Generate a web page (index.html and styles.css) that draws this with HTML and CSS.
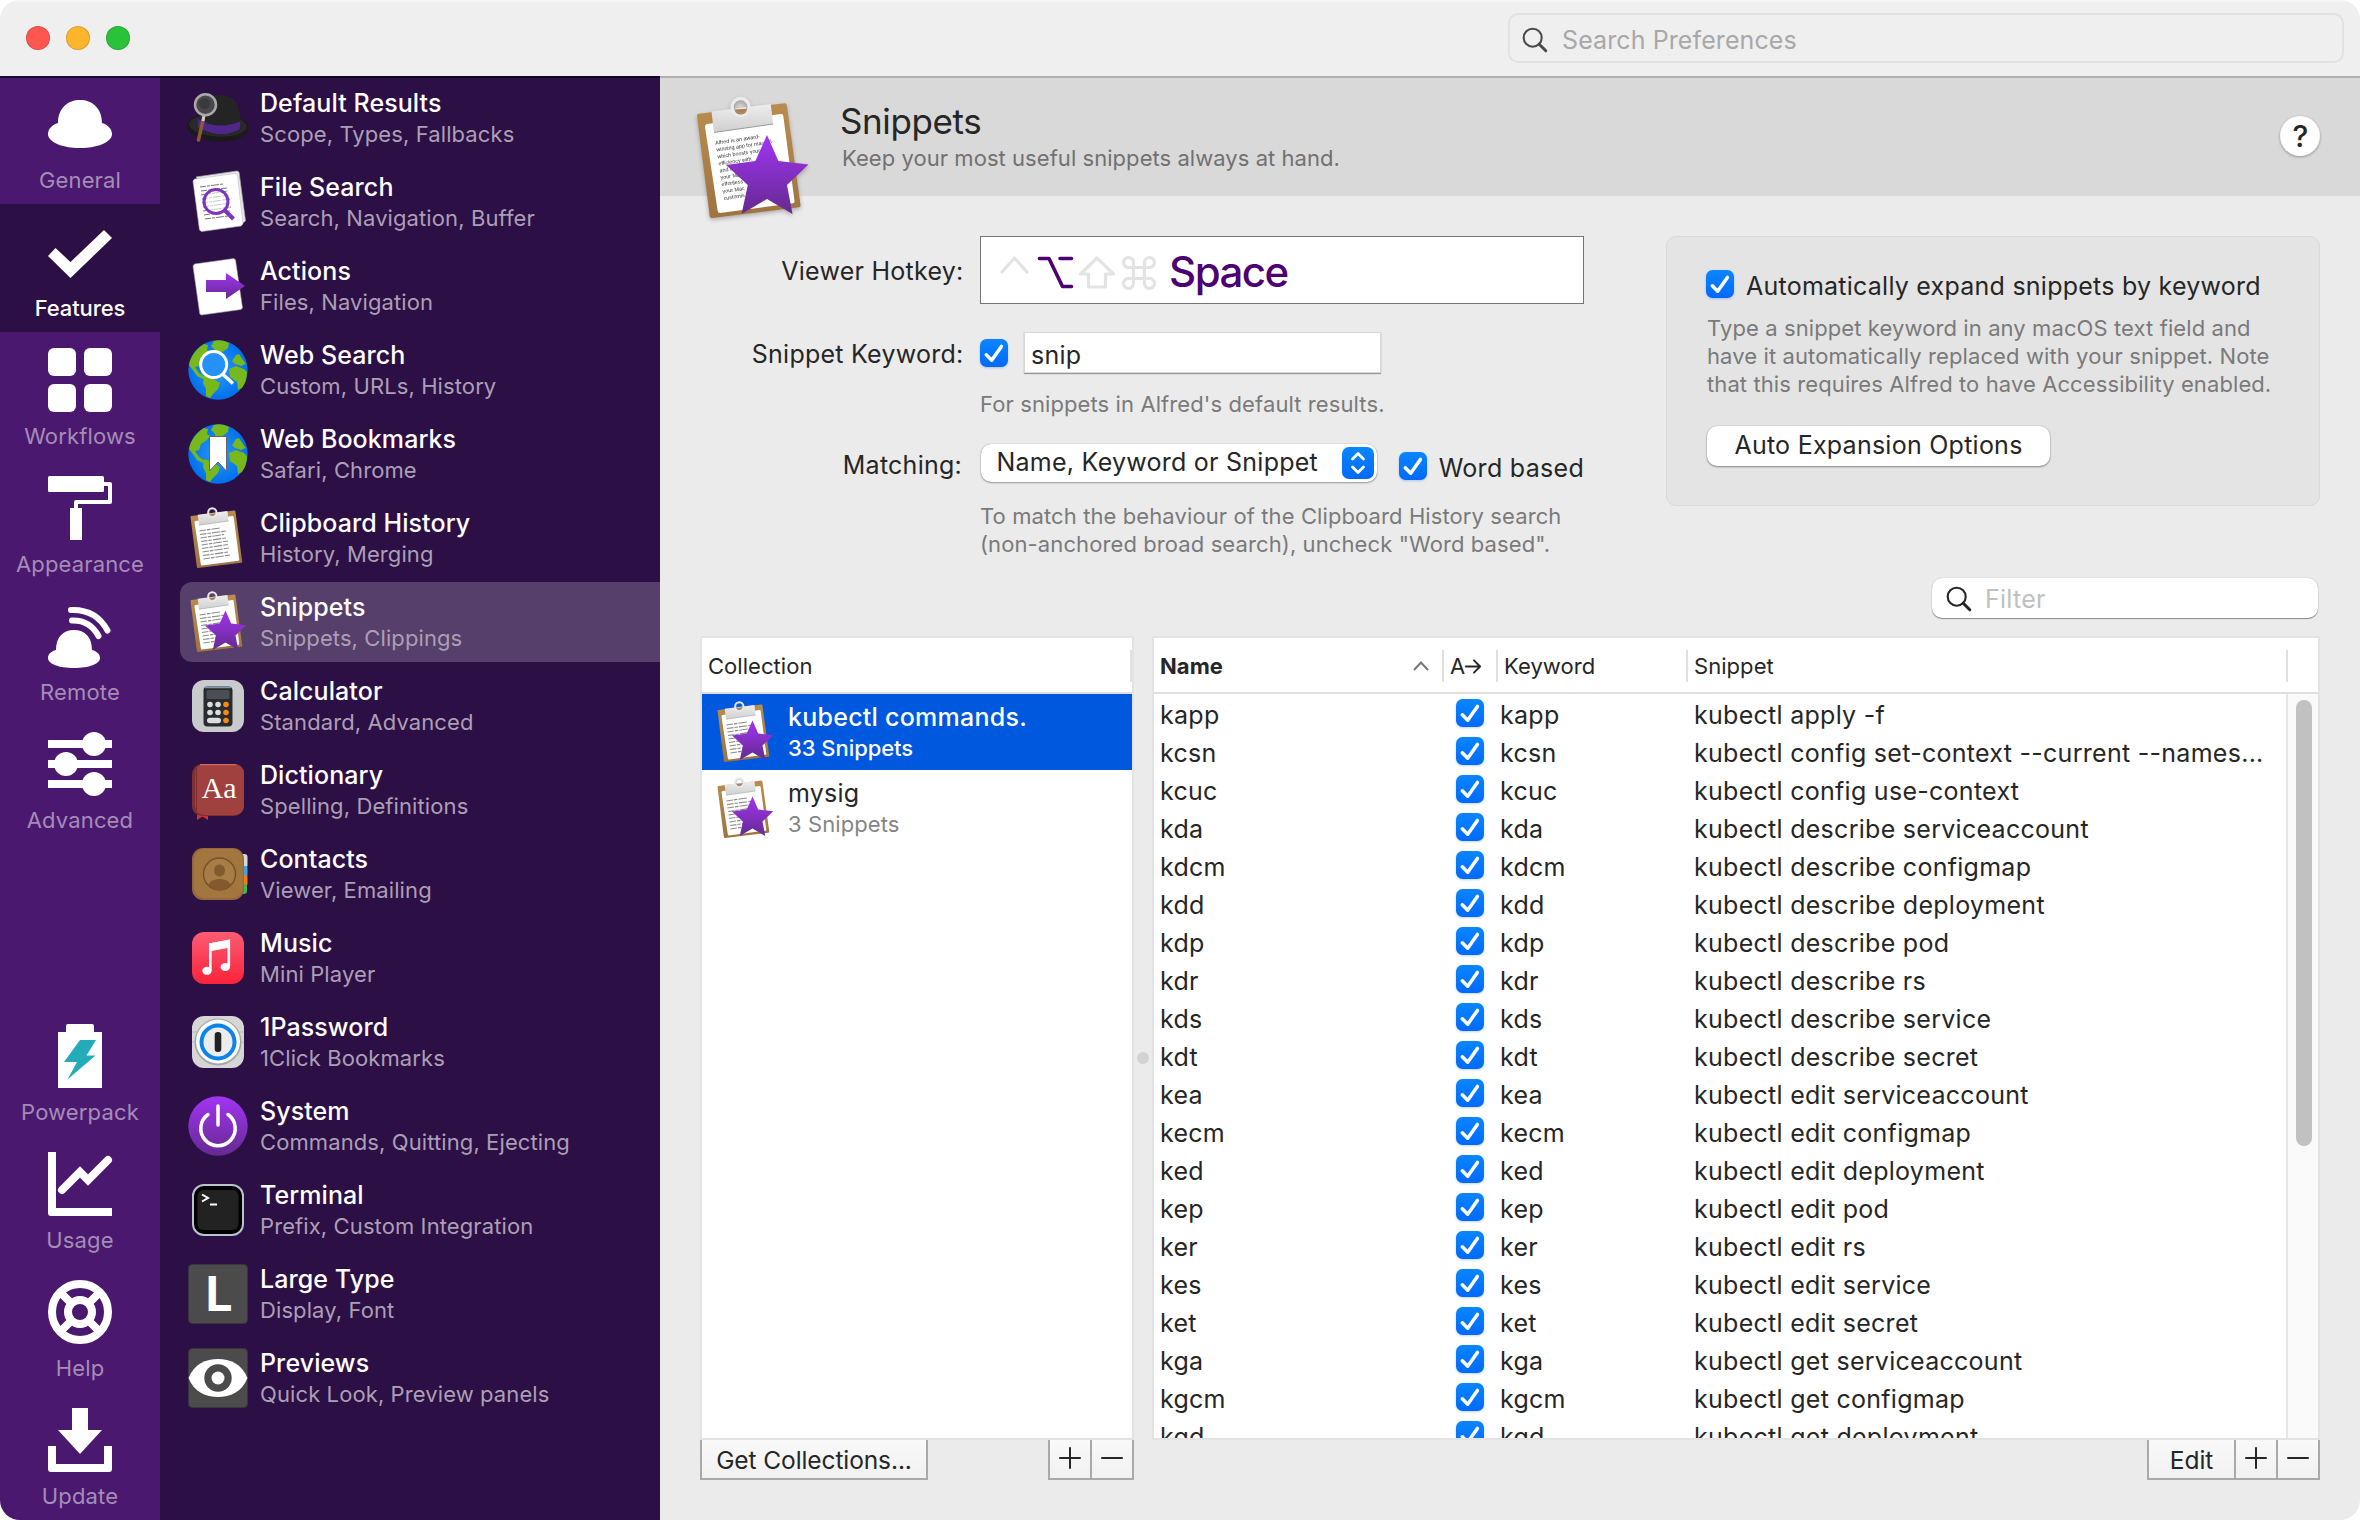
FILE: index.html
```html
<!DOCTYPE html>
<html lang="en">
<head>
<meta charset="utf-8">
<title>Alfred Preferences</title>
<link rel="stylesheet" href="styles.css">
</head>
<body>
<svg class="defs" width="0" height="0" aria-hidden="true">
  <defs>
    <linearGradient id="purple" x1="0" y1="0" x2="0" y2="1"><stop offset="0" stop-color="#a234f4"/><stop offset="1" stop-color="#652a90"/></linearGradient>
    <linearGradient id="wood" x1="0" y1="0" x2="0" y2="1"><stop offset="0" stop-color="#b98d4f"/><stop offset="1" stop-color="#9f7340"/></linearGradient>
    <linearGradient id="metal" x1="0" y1="0" x2="0" y2="1"><stop offset="0" stop-color="#eeeeee"/><stop offset="1" stop-color="#cfcfcf"/></linearGradient>
    <linearGradient id="blue" x1="0" y1="0" x2="0" y2="1"><stop offset="0" stop-color="#0a86ff"/><stop offset="1" stop-color="#0069fa"/></linearGradient>
    <radialGradient id="sea"><stop offset="0" stop-color="#2f9bf5"/><stop offset="1" stop-color="#0070ee"/></radialGradient>
    <symbol id="check" viewBox="0 0 28 28"><rect width="28" height="28" rx="6.5" fill="url(#blue)"/><path d="M6.3 15.8 11.700 21.200 21.400 7.400" fill="none" stroke="#fff" stroke-width="3.500" stroke-linecap="round" stroke-linejoin="round"/></symbol>
    <symbol id="board" viewBox="0 0 128 128">
      <path d="M11 19.800 96.500 9.200Q98.500 9 98.800 11L112.500 111Q112.800 113 111 113.300L24 124Q22 124.200 21.700 122L9 22Q8.800 20 11 19.800Z" fill="url(#wood)"/>
      <path d="M19 30 93 20Q95 19.800 95.300 22L106.500 107Q106.700 109 105 109.300L32 119Q30 119.200 29.700 117L17 33Q17 30.300 19 30Z" fill="#fff"/>
      <path d="M23.500 17.600 82.700 10 85.200 30 26 38.500Z" fill="url(#metal)"/><path d="M26 38.500 85.200 30" stroke="#999" stroke-width="1"/>
      <circle cx="52.600" cy="13" r="8.300" fill="none" stroke="#ebebeb" stroke-width="4"/><path d="M46.500 15.500a6.400 6.400 0 0 0 12.600-.8z" fill="#ae8148"/><circle cx="52.600" cy="13" r="6.400" fill="none" stroke="#999" stroke-width=".8"/>
    </symbol>
    <symbol id="lines" viewBox="0 0 128 128"><g stroke="#8b8b8b" stroke-width="2.200" stroke-dasharray="13 2 7 2 17 2"><path d="M27 50 68 44M28 57 80 50M29 64 76 57M30 71 80 64M31 78 84 70M32 85 84 77M33 92 86 84M34 99 84 92M35 106 88 98"/></g></symbol>
    <symbol id="star" viewBox="0 0 128 128"><path d="M79 41 90.400 67 120.500 70.500 99 91 104.500 120 79 105 53.600 120 59.800 91 38 71 67.400 67Z" fill="url(#purple)"/></symbol>
    <symbol id="globe" viewBox="0 0 64 64"><circle cx="32" cy="32" r="29.700" fill="url(#sea)"/>
      <g fill="#77b81c"><path d="M4 23Q8 12 18 6l4 1-1 5 3 2-3 4-6 4-2 6-4 1 4 6 6 4-2 2-6-3-5-7-3-4Z"/><path d="M28 3Q36 1 43 5l-1 5-7 5-4 3-2-6-4-4Z"/><path d="M18 37 26 40 34 45 32 51 27 56 24 60 20 58 20 51 17 45Z"/><path d="M46 23 50 17 53 16 57 22 60 26 55 28 49 26Z"/><path d="M43 31 50 28 58 31 61 34Q61 43 56 50L52 52 51 44 44 39Z"/></g></symbol>
    <symbol id="search" viewBox="0 0 26 26"><circle cx="10.700" cy="10.700" r="9" fill="none" stroke="currentColor" stroke-width="2.100"/><path d="M17.200 17.200 23.800 23.800" stroke="currentColor" stroke-width="3" stroke-linecap="round"/></symbol>
    <symbol id="plus" viewBox="0 0 22 22"><path d="M1 11H21M11 1V21" stroke="#262626" stroke-width="2" stroke-linecap="round"/></symbol>
    <symbol id="minus" viewBox="0 0 22 22"><path d="M1 11H21" stroke="#262626" stroke-width="2" stroke-linecap="round"/></symbol>
  </defs>
</svg>

<div class="window">
  <header class="titlebar">
    <div class="lights"><i class="red"></i><i class="amber"></i><i class="green"></i></div>
    <div class="search-prefs"><svg class="glass"><use href="#search"/></svg><span>Search Preferences</span></div>
  </header>

  <div class="panes">
    <nav class="rail">
      <a class="tab"><svg viewBox="0 0 64 64"><path d="M10 31C10 16 20 8 32 8s22 8 22 23C60 33 64 37 64 42 64 50 50 56 32 56S0 50 0 42c0-5 4-9 10-11Z"/></svg><span>General</span></a>
      <a class="tab active"><svg viewBox="0 0 64 64"><path d="M0 36 7.500 28 22.500 42 56 10 64 18 22.500 58Z"/></svg><span>Features</span></a>
      <a class="tab"><svg viewBox="0 0 64 64"><rect width="28" height="28" rx="6"/><rect x="36" width="28" height="28" rx="6"/><rect y="36" width="28" height="28" rx="6"/><rect x="36" y="36" width="28" height="28" rx="6"/></svg><span>Workflows</span></a>
      <a class="tab"><svg viewBox="0 0 64 64"><rect width="56" height="16" rx="1.500"/><path d="M56 8H62V26H28V33" fill="none" stroke="#fff" stroke-width="4" stroke-linejoin="round"/><rect x="22" y="32" width="12" height="32"/></svg><span>Appearance</span></a>
      <a class="tab"><svg viewBox="0 0 64 64"><path d="M8 46C8 33 15 26 26 26s18 7 18 20c5 1.500 8 4 8 8 0 6-11 10-26 10S0 60 0 54c0-4 3-6.500 8-8Z"/><path d="M23 6Q48 5 59.500 26.500M24 16.500Q42 16 50.500 32" fill="none" stroke="#fff" stroke-width="6" stroke-linecap="round"/></svg><span>Remote</span></a>
      <a class="tab"><svg viewBox="0 0 64 64"><path d="M0 8H64V16H0ZM0 28H64V36H0ZM0 48H64V56H0Z"/><circle cx="46" cy="12" r="12"/><circle cx="18" cy="32" r="12"/><circle cx="46" cy="52" r="12"/></svg><span>Advanced</span></a>
      <div class="spacer"></div>
      <a class="tab"><svg viewBox="0 0 64 64"><path d="M18 2q0-2 2-2H44q2 0 2 2V8h8V64H10V8h8Z"/><path d="M32 16H48L38.500 31.500H47.500L19.500 55.500 29 38H16Z" fill="#24abb9"/></svg><span>Powerpack</span></a>
      <a class="tab"><svg viewBox="0 0 64 64"><path d="M0 0H8V56H64V64H3Q0 64 0 61Z"/><path d="M14 38 32 20 40 28 60 8" fill="none" stroke="#fff" stroke-width="8" stroke-linecap="round"/></svg><span>Usage</span></a>
      <a class="tab"><svg viewBox="0 0 64 64"><g fill="none" stroke="#fff" stroke-width="8"><circle cx="32" cy="32" r="28"/><circle cx="32" cy="32" r="12"/><path d="M12 12 23 23M52 12 41 23M12 52 23 41M52 52 41 41"/></g></svg><span>Help</span></a>
      <a class="tab"><svg viewBox="0 0 64 64"><path d="M24 0H40V22H54L32 46 10 22H24Z"/><path d="M0 38H8V56H56V38H64V61Q64 64 61 64H3Q0 64 0 61Z"/></svg><span>Update</span></a>
    </nav>

    <nav class="features">
      <a class="feature"><svg viewBox="0 0 64 64"><g transform="rotate(3 32 38)"><ellipse cx="32" cy="41" rx="31" ry="14.500" fill="#1b1a1a"/><ellipse cx="32" cy="39.500" rx="29" ry="11" fill="#2a2929"/><path d="M13 42C12 22 18 9 34 9s21 13 20 32c-6 9-34 10-41 1Z" fill="#252424"/><path d="M12 34q20 11 42 0v8q-20 12-42 0Z" fill="#50268a"/></g><path d="M17.500 32 12.500 54" stroke="#8a5a35" stroke-width="3.500" stroke-linecap="round"/><path d="M18 29 17 35" stroke="#ccc" stroke-width="3"/><circle cx="19.500" cy="18.700" r="10.500" fill="#4a484c" stroke="#a9a9a9" stroke-width="2.500"/><circle cx="18.500" cy="17.500" r="5.500" fill="#3a393c"/></svg><div><b>Default Results</b><span>Scope, Types, Fallbacks</span></div></a>
      <a class="feature"><svg viewBox="0 0 64 64"><path d="M10 7 51 1 53 2 59.500 51 54 55Z" fill="#e9e9e9" stroke="#aaa" stroke-width=".7"/><path d="M8.500 9 49 3.500 51.500 5 57 54 55 56 15.500 61.500 13.500 60 7 11Z" fill="#fff" stroke="#bbb" stroke-width=".6"/><g stroke="#777" stroke-width="1" stroke-dasharray="6 1 3 1 8 1"><path d="M14 17 37 14M15 21 41 18M15 25 42 21M16 29 43 25M16 33 44 29M17 37 44 33M17 41 45 37M18 45 44 41M19 49 42 46"/></g><circle cx="30" cy="31.500" r="12" fill="#fff9" stroke="#7e35bd" stroke-width="3"/><path d="M38.500 40 47.500 49" stroke="#7e35bd" stroke-width="4"/></svg><div><b>File Search</b><span>Search, Navigation, Buffer</span></div></a>
      <a class="feature"><svg viewBox="0 0 64 64"><path d="M8.500 10 48 4.500 49.500 6 56.500 54 55 55.500 15.500 61 13.800 60 7 12Z" fill="#fff" stroke="#aaa" stroke-width=".6"/><path d="M20 26H40V19L59 32 40 45V38H20Z" fill="url(#purple)"/></svg><div><b>Actions</b><span>Files, Navigation</span></div></a>
      <a class="feature"><svg viewBox="0 0 64 64"><use href="#globe"/><circle cx="27.700" cy="26.500" r="13" fill="#2492f8" stroke="#fff" stroke-width="3"/><path d="M36.500 36 47 45.500" stroke="#fff" stroke-width="3.500"/></svg><div><b>Web Search</b><span>Custom, URLs, History</span></div></a>
      <a class="feature"><svg viewBox="0 0 64 64"><use href="#globe"/><path d="M23.500 14.500H40.500V49L32 40 23.500 49Z" fill="#fff" stroke="#666" stroke-width="1"/></svg><div><b>Web Bookmarks</b><span>Safari, Chrome</span></div></a>
      <a class="feature"><svg viewBox="0 0 128 128"><use href="#board"/><use href="#lines"/></svg><div><b>Clipboard History</b><span>History, Merging</span></div></a>
      <a class="feature active"><svg viewBox="0 0 128 128"><use href="#board"/><use href="#lines"/><use href="#star"/></svg><div><b>Snippets</b><span>Snippets, Clippings</span></div></a>
      <a class="feature"><svg viewBox="0 0 64 64"><rect x="6" y="6" width="52" height="52" rx="12" fill="#c9cacb"/><rect x="17.500" y="12.500" width="29" height="40" rx="4" fill="#292b2f"/><path d="M19 13.500H45" stroke="#7b98ac" stroke-width="1.500"/><rect x="20.500" y="16" width="23" height="9" rx="1.500" fill="#4b4e53"/><g fill="#ddd"><circle cx="24" cy="30.500" r="2.800"/><circle cx="32" cy="30.500" r="2.800"/><circle cx="24" cy="38.500" r="2.800"/><circle cx="32" cy="38.500" r="2.800"/><rect x="21" y="43.700" width="14" height="5.600" rx="2.800"/></g><g fill="#f88a14"><circle cx="40" cy="30.500" r="2.800"/><circle cx="40" cy="38.500" r="2.800"/><circle cx="40" cy="46.500" r="2.800"/></g></svg><div><b>Calculator</b><span>Standard, Advanced</span></div></a>
      <a class="feature"><svg viewBox="0 0 64 64"><path d="M11 54H22V62L16.500 58.500 11 62Z" fill="#d0322e"/><rect x="6" y="6" width="52" height="52" rx="10" fill="#7f2f2f"/><rect x="9" y="6" width="49" height="51" rx="9" fill="#a04140"/><path d="M10.500 10V54" stroke="#7b2e2e"/><path d="M14 6.700H50" stroke="#d46864" stroke-width="1.200"/><text class="serif-aa" x="33" y="40" text-anchor="middle">Aa</text></svg><div><b>Dictionary</b><span>Spelling, Definitions</span></div></a>
      <a class="feature"><svg viewBox="0 0 64 64"><rect x="48" y="12" width="13.500" height="14" rx="3" fill="#d8d8d8"/><rect x="48" y="24" width="13.500" height="11" rx="2" fill="#3aa8e8"/><rect x="48" y="33" width="13.500" height="11" rx="2" fill="#ee7d1c"/><rect x="48" y="42" width="13" height="10" rx="3" fill="#43b94c"/><rect x="6" y="6" width="52" height="52" rx="11" fill="#94693a"/><rect x="8" y="7" width="49" height="49" rx="10" fill="#a3763f"/><circle cx="33.500" cy="32" r="16" fill="#a87c45" stroke="#755126" stroke-width="1.400"/><ellipse cx="33.500" cy="28.500" rx="5.500" ry="6" fill="#815a2d"/><path d="M22 43Q25 37 33.500 37T45 43Q40 48 33.500 48T22 43Z" fill="#815a2d"/></svg><div><b>Contacts</b><span>Viewer, Emailing</span></div></a>
      <a class="feature"><svg viewBox="0 0 64 64"><defs><linearGradient id="music" x1="0" y1="0" x2="0" y2="1"><stop offset="0" stop-color="#fb5c74"/><stop offset="1" stop-color="#fa2339"/></linearGradient></defs><rect x="6" y="6" width="52" height="52" rx="12" fill="url(#music)"/><path d="M24.300 44V18.500L42.800 15V40" fill="none" stroke="#fff" stroke-width="2.600"/><path d="M23 17.500 44 13.500V21.500L23 25.500Z" fill="#fff"/><ellipse cx="21" cy="44.800" rx="4.700" ry="4" fill="#fff"/><ellipse cx="39.300" cy="41" rx="4.700" ry="4" fill="#fff"/></svg><div><b>Music</b><span>Mini Player</span></div></a>
      <a class="feature"><svg viewBox="0 0 64 64"><rect x="6" y="6" width="52" height="52" rx="12" fill="#d6d6d6"/><path d="M6 22H58M6 32H58" stroke="#bbb"/><circle cx="32" cy="32" r="23.500" fill="#a6a6a6"/><circle cx="32" cy="31.500" r="22" fill="#fafafa"/><circle cx="32" cy="32" r="18.500" fill="#0a84ea"/><circle cx="32" cy="32" r="14.500" fill="#ececec"/><rect x="28.700" y="22" width="6.600" height="20" rx="3" fill="#222"/></svg><div><b>1Password</b><span>1Click Bookmarks</span></div></a>
      <a class="feature"><svg viewBox="0 0 64 64"><circle cx="32" cy="32" r="29.700" fill="url(#purple)"/><path d="M32 12V31M22 20.500A17.200 17.200 0 1 0 42 20.500" fill="none" stroke="#fff" stroke-width="3.500" stroke-linecap="round"/></svg><div><b>System</b><span>Commands, Quitting, Ejecting</span></div></a>
      <a class="feature"><svg viewBox="0 0 64 64"><rect x="7" y="7" width="50" height="50" rx="11" fill="#000" stroke="#b5c5cb" stroke-width="2"/><rect x="11.500" y="12" width="41" height="40" rx="6" fill="#222"/><path d="M16 16.500 22 20 16 23.500M24 26.500H31" fill="none" stroke="#fff" stroke-width="2"/></svg><div><b>Terminal</b><span>Prefix, Custom Integration</span></div></a>
      <a class="feature"><svg viewBox="0 0 64 64"><rect x="2.500" y="2.500" width="59" height="59" rx="4" fill="#4b4b4b" stroke="#3a3340"/><text class="big-l" x="33" y="49" text-anchor="middle">L</text></svg><div><b>Large Type</b><span>Display, Font</span></div></a>
      <a class="feature"><svg viewBox="0 0 64 64"><rect x="2.500" y="2.500" width="59" height="59" rx="4" fill="#4b4b4b" stroke="#3a3340"/><path d="M2.500 32C8 18 20 13 32 13S56 18 61.500 32C56 46 44 51 32 51S8 46 2.500 32Z" fill="#fff"/><circle cx="32" cy="32" r="13.700" fill="#4b4b4b"/><circle cx="32" cy="32" r="6.500" fill="#fff"/></svg><div><b>Previews</b><span>Quick Look, Preview panels</span></div></a>
    </nav>

    <main class="content">
      <section class="hero">
        <svg class="hero-icon" viewBox="0 0 128 128"><use href="#board"/>
          <g class="paper-text" transform="translate(27.600 50.700) rotate(-8.500)"><text>Alfred is an award-</text><text y="7">winning app for macOS</text><text y="14">which boosts your</text><text y="21">efficiency with</text><text y="28">and custom</text><text y="35">your Mac</text><text y="42">effortless</text><text y="49">your Mac</text><text y="56">customis</text></g>
          <use href="#star"/></svg>
        <div class="hero-text"><h1>Snippets</h1><p>Keep your most useful snippets always at hand.</p></div>
        <div class="help-button">?</div>
      </section>

      <section class="settings">
        <div class="form">
          <div class="row hotkey-row"><label>Viewer Hotkey:</label>
            <div class="hotkey"><svg viewBox="0 0 160 36" fill="none" stroke-linecap="round" stroke-linejoin="round"><g stroke="#e3e3e3" stroke-width="3.200"><path d="M3 18 15.500 4 28 18"/><path d="M98 4 114.500 20H106.500V33H89.500V20H81.500Z"/><path d="M134.500 13.500H145.500V24.500H134.500ZM134.500 13.500H130a5 5 0 1 1 4.500-5ZM145.500 13.500V8.500a5 5 0 1 1 4.500 5ZM145.500 24.500H150a5 5 0 1 1-4.500 5ZM134.500 24.500V29.500a5 5 0 1 1-4.500-5Z"/></g><path d="M40.500 4.500H50L63.500 32.500H72.500M61 4.500H72.500" stroke="#4d0072" stroke-width="3.600"/></svg><span>Space</span></div></div>
          <div class="row keyword-row"><label>Snippet Keyword:</label><svg class="cb"><use href="#check"/></svg><div class="textfield">snip</div></div>
          <p class="note first">For snippets in Alfred's default results.</p>
          <div class="row match-row"><label>Matching:</label><div class="popup"><span>Name, Keyword or Snippet</span><svg viewBox="0 0 32 32"><rect width="32" height="32" rx="7" fill="url(#blue)"/><path d="M10.500 12 16 6.500 21.500 12M10.500 20 16 25.500 21.500 20" fill="none" stroke="#fff" stroke-width="2.800" stroke-linecap="round" stroke-linejoin="round"/></svg></div><svg class="cb low"><use href="#check"/></svg><span class="word">Word based</span></div>
          <p class="note second">To match the behaviour of the Clipboard History search<br>(non-anchored broad search), uncheck "Word based".</p>
        </div>
        <div class="panel">
          <div class="panel-head"><svg class="cb"><use href="#check"/></svg><span>Automatically expand snippets by keyword</span></div>
          <p>Type a snippet keyword in any macOS text field and<br>have it automatically replaced with your snippet. Note<br>that this requires Alfred to have Accessibility enabled.</p>
          <div class="push">Auto Expansion Options</div>
        </div>
      </section>

      <div class="filter"><svg class="glass"><use href="#search"/></svg><span>Filter</span></div>

      <section class="tables">
        <div class="collections">
          <div class="box">
            <div class="coll-head">Collection</div>
            <div class="coll selected"><svg viewBox="0 0 128 128"><use href="#board"/><use href="#lines"/><use href="#star"/></svg><div><b>kubectl commands.</b><span>33 Snippets</span></div></div>
            <div class="coll"><svg viewBox="0 0 128 128"><use href="#board"/><use href="#lines"/><use href="#star"/></svg><div><b>mysig</b><span>3 Snippets</span></div></div>
          </div>
          <div class="actions"><div class="seg get">Get Collections...</div><div class="gap"></div><div class="seg"><svg><use href="#plus"/></svg></div><div class="seg"><svg><use href="#minus"/></svg></div></div>
        </div>
        <div class="splitter"><i></i></div>
        <div class="snippets">
          <div class="box">
            <div class="head"><div class="h-name">Name<svg viewBox="0 0 16 10"><path d="M1 9 8 1.500 15 9" fill="none" stroke="#777" stroke-width="2"/></svg></div><div>A<svg class="arrow" viewBox="0 0 18 18"><path d="M1 9H16M9.500 2.500 16 9 9.500 15.500" fill="none" stroke="#262626" stroke-width="2" stroke-linecap="round" stroke-linejoin="round"/></svg></div><div>Keyword</div><div>Snippet</div><div></div></div>
            <div class="scroll">
              <div class="rows">
                <div class="tr"><span>kapp</span><svg class="cb"><use href="#check"/></svg><span>kapp</span><span>kubectl apply -f</span></div>
                <div class="tr"><span>kcsn</span><svg class="cb"><use href="#check"/></svg><span>kcsn</span><span>kubectl config set-context --current --names...</span></div>
                <div class="tr"><span>kcuc</span><svg class="cb"><use href="#check"/></svg><span>kcuc</span><span>kubectl config use-context</span></div>
                <div class="tr"><span>kda</span><svg class="cb"><use href="#check"/></svg><span>kda</span><span>kubectl describe serviceaccount</span></div>
                <div class="tr"><span>kdcm</span><svg class="cb"><use href="#check"/></svg><span>kdcm</span><span>kubectl describe configmap</span></div>
                <div class="tr"><span>kdd</span><svg class="cb"><use href="#check"/></svg><span>kdd</span><span>kubectl describe deployment</span></div>
                <div class="tr"><span>kdp</span><svg class="cb"><use href="#check"/></svg><span>kdp</span><span>kubectl describe pod</span></div>
                <div class="tr"><span>kdr</span><svg class="cb"><use href="#check"/></svg><span>kdr</span><span>kubectl describe rs</span></div>
                <div class="tr"><span>kds</span><svg class="cb"><use href="#check"/></svg><span>kds</span><span>kubectl describe service</span></div>
                <div class="tr"><span>kdt</span><svg class="cb"><use href="#check"/></svg><span>kdt</span><span>kubectl describe secret</span></div>
                <div class="tr"><span>kea</span><svg class="cb"><use href="#check"/></svg><span>kea</span><span>kubectl edit serviceaccount</span></div>
                <div class="tr"><span>kecm</span><svg class="cb"><use href="#check"/></svg><span>kecm</span><span>kubectl edit configmap</span></div>
                <div class="tr"><span>ked</span><svg class="cb"><use href="#check"/></svg><span>ked</span><span>kubectl edit deployment</span></div>
                <div class="tr"><span>kep</span><svg class="cb"><use href="#check"/></svg><span>kep</span><span>kubectl edit pod</span></div>
                <div class="tr"><span>ker</span><svg class="cb"><use href="#check"/></svg><span>ker</span><span>kubectl edit rs</span></div>
                <div class="tr"><span>kes</span><svg class="cb"><use href="#check"/></svg><span>kes</span><span>kubectl edit service</span></div>
                <div class="tr"><span>ket</span><svg class="cb"><use href="#check"/></svg><span>ket</span><span>kubectl edit secret</span></div>
                <div class="tr"><span>kga</span><svg class="cb"><use href="#check"/></svg><span>kga</span><span>kubectl get serviceaccount</span></div>
                <div class="tr"><span>kgcm</span><svg class="cb"><use href="#check"/></svg><span>kgcm</span><span>kubectl get configmap</span></div>
                <div class="tr"><span>kgd</span><svg class="cb"><use href="#check"/></svg><span>kgd</span><span>kubectl get deployment</span></div>
              </div>
              <div class="track"><div class="thumb"></div></div>
            </div>
          </div>
          <div class="actions"><div class="gap"></div><div class="seg edit">Edit</div><div class="seg"><svg><use href="#plus"/></svg></div><div class="seg"><svg><use href="#minus"/></svg></div></div>
        </div>
      </section>
    </main>
  </div>
</div>
</body>
</html>
```

FILE: styles.css
```css
* { box-sizing: border-box; }
body { margin: 0; background: #fff; font-family: Inter, "Liberation Sans", sans-serif; font-size: 25px; letter-spacing: .25px; color: #262626; }
svg { display: block; flex: none; overflow: visible; }
.defs { position: absolute; }
p, h1 { margin: 0; font-weight: 400; }
span, label, b, p, h1 { white-space: nowrap; }

.window { width: 2360px; height: 1520px; border-radius: 20px; overflow: hidden; background: #ebebeb; display: flex; flex-direction: column; }
.titlebar { height: 76px; flex: none; background: #efefef; display: flex; justify-content: space-between; padding: 13px 16px 0 26px; box-shadow: inset 0 2px 0 #f6f6f6; }
.lights { display: flex; gap: 16px; padding-top: 12.5px; }
.lights i { width: 24px; height: 24px; border-radius: 50%; border: 1px solid #0002; }
.red { background: #ff5650; }
.amber { background: #fdb52e; }
.green { background: #2ac238; }
.search-prefs { width: 836px; height: 50px; border: 2px solid #e1e1e1; border-radius: 10px; display: flex; align-items: center; gap: 14px; padding: 3px 0 0 12px; color: #a8a8a8; letter-spacing: .1px; }
.glass { width: 26px; height: 26px; color: #4a4a4a; }
.panes { flex: 1; display: flex; min-height: 0; }

.rail { width: 160px; background: #4a196f; display: flex; flex-direction: column; box-shadow: inset 0 2px 0 #1c0834; }
.tab { height: 128px; padding-top: 16px; display: flex; flex-direction: column; align-items: center; color: #a48cb7; font-size: 22px; line-height: 28px; }
.tab svg { width: 64px; height: 64px; fill: #fff; margin-bottom: 10px; }
.tab span { letter-spacing: .15px; }
.tab.active { background: #2c0f45; color: #fff; font-weight: 500; }
.tab.active span { letter-spacing: -.1px; }
.spacer { flex: 1; }

.features { width: 500px; padding: 2px 0 0 20px; background: #2c0f45; display: flex; flex-direction: column; gap: 4px; box-shadow: inset 0 2px 0 #120524; }
.feature { height: 80px; padding-left: 6px; display: flex; align-items: center; gap: 10px; border-radius: 12px 0 0 12px; }
.feature.active { background: #563f6a; }
.feature svg { width: 64px; height: 64px; }
.feature div, .coll div { display: flex; flex-direction: column; }
.feature b { font-weight: 500; font-size: 25px; line-height: 32px; letter-spacing: .08px; color: #fff; }
.feature span { font-size: 22px; line-height: 30px; letter-spacing: .1px; color: #ab9fb5; }
.serif-aa { font: 30px "Liberation Serif", serif; fill: #fff; letter-spacing: 0; }
.big-l { font: 700 48px Inter, sans-serif; fill: #fff; letter-spacing: 0; }

.content { flex: 1; display: flex; flex-direction: column; }
.hero { height: 120px; background: #d9d9d9; border-top: 2px solid #b0b0b0; padding-left: 28px; display: flex; align-items: flex-start; }
.hero-icon { width: 128px; height: 128px; margin-top: 16px; filter: drop-shadow(0 2px 2px #0004); }
.paper-text { font: 5.400px "Liberation Sans", sans-serif; letter-spacing: 0; fill: #333; }
.hero-text { padding: 21px 0 0 24px; flex: 1; }
.hero h1 { font-size: 35px; line-height: 44px; letter-spacing: -.4px; }
.hero p { font-size: 22px; line-height: 28px; letter-spacing: .05px; color: #717171; padding: 1px 0 0 2px; }
.help-button { width: 40px; height: 40px; border-radius: 50%; background: #fff; box-shadow: 0 1px 3px #0005; margin: 38px 40px 0 0; display: flex; align-items: center; justify-content: center; font-size: 30px; font-weight: 500; padding-left: 1px; }

.settings { display: flex; justify-content: space-between; padding: 40px 40px 0 0; height: 382px; flex: none; }
.form { width: 924px; }
.row { display: flex; align-items: center; }
.row label { width: 303.500px; margin-right: 16.500px; text-align: right; line-height: 32px; }
.hotkey-row label { padding-top: 1px; }
.hotkey { width: 604px; height: 68px; border: 1px solid #747474; background: #fff; display: flex; align-items: center; padding-left: 18px; color: #4d0072; }
.hotkey svg { width: 160px; height: 36px; margin-top: 4px; }
.hotkey span { font-size: 42px; font-weight: 500; line-height: 60px; letter-spacing: -1.500px; margin-left: 10px; padding-top: 4px; }
.cb { width: 28px; height: 28px; filter: drop-shadow(0 1px 1px #0060ff44); }
.keyword-row { height: 42px; margin-top: 27px; }
.keyword-row label, .textfield { padding-top: 4px; }
.keyword-row .cb { margin-top: 2px; }
.textfield { width: 357px; height: 41px; margin-left: 16px; padding-left: 7px; background: #fff; box-shadow: inset 0 0 0 1px #d8d8d8, 0 1px 1px #999; line-height: 38px; }
.note { margin-left: 320px; font-size: 22px; line-height: 28px; letter-spacing: .1px; color: #7a7a7a; }
.first { margin-top: 17px; }
.match-row { height: 38px; margin-top: 26px; }
.match-row label { padding-top: 3px; }
.popup { width: 398px; height: 38px; margin-left: 2px; padding: 0 3px 0 16px; border-radius: 10px; background: #fff; box-shadow: 0 0 1px #0006, 0 1px 2px #0005; display: flex; align-items: center; justify-content: space-between; }
.popup span { line-height: 34px; padding-bottom: 3px; }
.popup svg { width: 32px; height: 32px; }
.low { margin: 6px 12px 0 22px; }
.word { padding-top: 9px; letter-spacing: .3px; }
.second { margin-top: 20px; }
.panel { width: 654px; height: 270px; background: #e4e4e4; border: 1px solid #d9d9d9; border-radius: 10px; padding: 33px 0 0 39px; }
.panel-head { display: flex; align-items: center; gap: 12px; height: 30px; }
.panel-head .cb { margin-top: -2px; }
.panel-head span { padding-top: 2px; letter-spacing: .24px; }
.panel p { font-size: 22px; line-height: 28px; letter-spacing: .1px; color: #7a7a7a; margin: 14px 0 0 1px; }
.push { width: 343px; height: 40px; margin: 28px 0 0 1px; border-radius: 10px; background: #fff; box-shadow: 0 0 1px #0005, 0 1px 2px #0006; text-align: center; line-height: 38px; }
.filter { width: 386px; height: 40px; flex: none; margin-right: 42px; align-self: flex-end; border-radius: 10px; background: #fff; box-shadow: 0 0 1px #0005, 0 1px 1px #0006; display: flex; align-items: center; gap: 13px; padding: 2px 0 0 14px; color: #c0c0c0; }
.filter .glass { color: #262626; }

.tables { display: flex; padding: 18px 40px 40px; flex: 1; min-height: 0; }
.collections { width: 434px; display: flex; flex-direction: column; }
.splitter { width: 18px; display: flex; align-items: center; justify-content: center; }
.splitter i { width: 12px; height: 12px; border-radius: 50%; background: #d3d3d3; }
.snippets { width: 1168px; display: flex; flex-direction: column; }
.box { height: 804px; flex: none; background: #fff; border: 2px solid #e3e3e3; display: flex; flex-direction: column; overflow: hidden; }
.coll-head { height: 56px; border-bottom: 2px solid #e0e0e0; padding-left: 6px; font-size: 22px; letter-spacing: .05px; line-height: 56px; background: linear-gradient(#e0e0e0, #e0e0e0) right 12px / 2px 32px no-repeat; }
.coll { height: 76px; padding-left: 11px; display: flex; align-items: center; gap: 11px; }
.coll svg { width: 64px; height: 64px; }
.coll b { font-weight: 400; line-height: 30px; padding-bottom: 2px; }
.coll span { font-size: 22px; line-height: 28px; letter-spacing: .1px; color: #858585; }
.selected { background: #0058de; }
.selected b, .selected span { color: #fff; font-weight: 500; }
.selected span { letter-spacing: -.05px; }
.actions { display: flex; height: 40px; }
.gap { flex: 1; }
.seg { width: 42px; height: 40px; border: solid #a9a9a9; border-width: 0 0 2px 2px; background: linear-gradient(#f9f9f9, #f1f1f1); display: flex; justify-content: center; align-items: center; font-size: 24.500px; letter-spacing: -.1px; padding-top: 1px; }
.seg svg { width: 22px; height: 22px; margin-top: -4px; }
.seg:last-child, .get { width: 44px; border-right-width: 2px; }
.actions .get { width: 228px; }
.edit { width: 87px; }

.head { display: grid; grid-template-columns: 290px 54px 190px 600px 1fr; height: 56px; flex: none; border-bottom: 2px solid #e0e0e0; font-size: 22px; letter-spacing: .05px; line-height: 56px; }
.head div { padding-left: 6px; display: flex; align-items: center; background: linear-gradient(#e0e0e0, #e0e0e0) right 12px / 2px 32px no-repeat; }
.head div:last-child { background: none; }
.head .h-name { font-weight: 700; justify-content: space-between; padding-right: 15px; }
.h-name svg { width: 16px; height: 10px; }
.arrow { width: 17px; height: 17px; }
.scroll { flex: 1; min-height: 0; display: flex; }
.rows { flex: 1; overflow: hidden; }
.tr { display: grid; grid-template-columns: 296px 44px 194px 1fr; height: 38px; padding-left: 6px; line-height: 43px; letter-spacing: .28px; }
.tr .cb { margin-top: 5px; }
.track { width: 32px; background: #fafafa; border-left: 2px solid #e6e6e6; padding: 6px 0 0 8px; }
.thumb { width: 16px; height: 446px; border-radius: 8px; background: #c1c1c1; }
```
